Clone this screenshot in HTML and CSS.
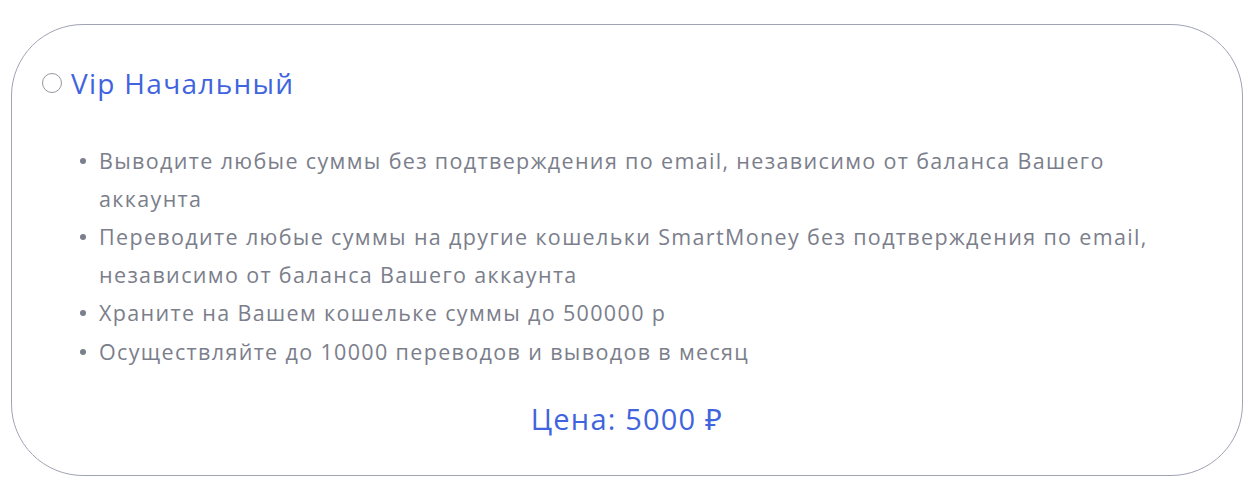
FILE: index.html
```html
<!DOCTYPE html>
<html lang="ru">
<head>
<meta charset="utf-8">
<link rel="stylesheet" href="styles.css">
</head>
<body>
<div class="card">
  <div class="title-row">
    <span class="radio"></span>
    <span class="title">Vip Начальный</span>
  </div>
  <ul class="features">
    <li>Выводите любые суммы без подтверждения по email, независимо от баланса Вашего аккаунта</li>
    <li>Переводите любые суммы на другие кошельки SmartMoney без подтверждения по email, независимо от баланса Вашего аккаунта</li>
    <li>Храните на Вашем кошельке суммы до 500000 р</li>
    <li>Осуществляйте до 10000 переводов и выводов в месяц</li>
  </ul>
  <div class="price">Цена: 5000 ₽</div>
</div>
</body>
</html>
```
FILE: styles.css
```css
html, body {
  margin: 0;
  padding: 0;
  background: #ffffff;
}
body {
  font-family: "Open Sans", "Noto Sans", sans-serif;
  padding: 24px 12px 0 11px;
}
.card {
  box-sizing: border-box;
  width: 1232px;
  height: 452px;
  border: 1.5px solid #a0a3b2;
  border-radius: 72px;
  padding: 38.5px 30px 0 30px;
}
.title-row {
  display: flex;
  align-items: center;
  gap: 9px;
  height: 38px;
}
.radio {
  box-sizing: border-box;
  width: 20px;
  height: 20px;
  border: 1.5px solid #95979f;
  border-radius: 50%;
  flex: none;
}
.title {
  font-size: 28px;
  letter-spacing: 1.3px;
  color: #3f64de;
  line-height: 38px;
}
.features {
  list-style: none;
  margin: 40.5px 30px 0 0;
  padding: 0 0 0 57px;
  color: #7b7e8b;
  font-size: 21.5px;
  letter-spacing: 1.35px;
  line-height: 37.5px;
}
.features li {
  position: relative;
}
.features li + li {
  margin-top: 1px;
}
.features li::before {
  content: "";
  position: absolute;
  left: -19px;
  top: 16px;
  width: 6px;
  height: 6px;
  border-radius: 50%;
  background: #7b7e8b;
}
.price {
  margin-top: 30px;
  text-align: center;
  font-size: 29px;
  letter-spacing: 1.2px;
  color: #3f64de;
  line-height: 38px;
}
```
